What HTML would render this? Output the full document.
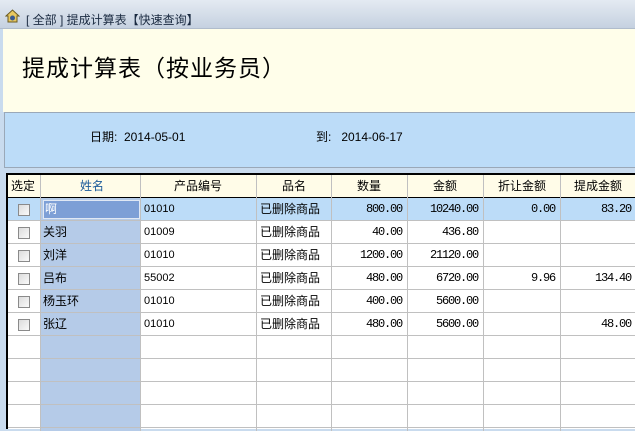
<!DOCTYPE html>
<html><head><meta charset="utf-8"><style>
*{margin:0;padding:0;box-sizing:border-box}
body{width:635px;height:429px;overflow:hidden;background:#c9dbee;font-family:"Liberation Sans","Noto Sans CJK SC",sans-serif;font-size:12px;color:#000;position:relative}
.a{position:absolute}
.top{left:0;top:0;width:635px;height:29px;background:linear-gradient(#e4eaf2,#c5d1e0);border-bottom:1px solid #b0bccc}
.cream{left:3px;top:29px;width:632px;height:83px;background:#fffeea}
.panel{left:4px;top:112px;width:631px;height:56px;background:#bcdcf8;border-top:1px solid #9aa8b8;border-bottom:1px solid #9aa8b8;border-left:1px solid #9aa8b8}
.tbl{left:6px;top:173px;width:629px;height:256px;background:#fff;border-left:2px solid #000;border-top:2px solid #000}
.hl{position:absolute;left:0;width:629px;height:1px;background:#c0c0c0}
.vl{position:absolute;top:0;width:1px;height:256px;background:#c0c0c0}
.c{position:absolute;line-height:22px;white-space:nowrap}
.r{text-align:right;font-family:"Liberation Mono",monospace;font-size:12px;letter-spacing:-1.2px}
.cb{position:absolute;width:12px;height:12px;border:1px solid #8a8a8a;background:linear-gradient(135deg,#dcdcdc,#fafafa)}
</style></head><body>
<div class="a top"></div>
<div class="a" style="left:5px;top:9px;width:15px;height:14px">
<svg width="15" height="14"><path d="M1 7 L7.5 1 L14 7 L12 7 L12 13 L3 13 L3 7Z" fill="#e8c860" stroke="#6a5a20" stroke-width="1"/><circle cx="7.5" cy="9" r="2.5" fill="#3a5a90"/></svg></div>
<div class="a" style="left:26px;top:11px;font-size:12px;color:#1a2a40">[ 全部 ] 提成计算表【快速查询】</div>
<div class="a cream"></div>
<div class="a" style="left:22px;top:49px;font-size:23px;letter-spacing:1px">提成计算表（按业务员）</div>
<div class="a panel"></div>
<div class="a" style="left:90px;top:128px">日期:&nbsp; 2014-05-01</div>
<div class="a" style="left:316px;top:128px">到:&nbsp;&nbsp; 2014-06-17</div>
<div class="a tbl">
 <div style="position:absolute;left:0;top:0;width:629px;height:23px;background:#fffce8"></div>
 <div style="position:absolute;left:33px;top:23px;width:100px;height:233px;background:#b5cbe8"></div>
 <div style="position:absolute;left:0;top:23px;width:629px;height:23px;background:#bcdcf8"></div>
 <div style="position:absolute;left:33px;top:23px;width:100px;height:23px;background:#b5cbe8"></div>
 <div style="position:absolute;left:35px;top:25px;width:97px;height:19px;background:#7d9fd6;border:1px solid #e0e8f4"></div>
 <div class="hl" style="top:22px;background:#000"></div>
 <div class="hl" style="top:45px"></div><div class="hl" style="top:68px"></div><div class="hl" style="top:91px"></div><div class="hl" style="top:114px"></div><div class="hl" style="top:137px"></div><div class="hl" style="top:160px"></div><div class="hl" style="top:183px"></div><div class="hl" style="top:206px"></div><div class="hl" style="top:229px"></div><div class="hl" style="top:252px"></div>
 <div class="vl" style="left:32px"></div><div class="vl" style="left:132px"></div><div class="vl" style="left:248px"></div><div class="vl" style="left:323px"></div><div class="vl" style="left:399px"></div><div class="vl" style="left:475px"></div><div class="vl" style="left:552px"></div>
 <div class="c" style="left:3px;top:0">选定</div>
 <div class="c" style="left:72px;top:0;color:#1a5a9a">姓名</div>
 <div class="c" style="left:166px;top:0">产品编号</div>
 <div class="c" style="left:274px;top:0">品名</div>
 <div class="c" style="left:349px;top:0">数量</div>
 <div class="c" style="left:425px;top:0">金额</div>
 <div class="c" style="left:490px;top:0">折让金额</div>
 <div class="c" style="left:566px;top:0">提成金额</div>

 <div class="cb" style="left:10px;top:29px"></div><div class="cb" style="left:10px;top:52px"></div><div class="cb" style="left:10px;top:75px"></div><div class="cb" style="left:10px;top:98px"></div><div class="cb" style="left:10px;top:121px"></div><div class="cb" style="left:10px;top:144px"></div>

 <div class="c" style="left:37px;top:23px;color:#fff">啊</div>
 <div class="c" style="left:35px;top:46px">关羽</div>
 <div class="c" style="left:35px;top:69px">刘洋</div>
 <div class="c" style="left:35px;top:92px">吕布</div>
 <div class="c" style="left:35px;top:115px">杨玉环</div>
 <div class="c" style="left:35px;top:138px">张辽</div>

 <div class="c" style="left:136px;top:23px;font-size:11px">01010</div>
 <div class="c" style="left:136px;top:46px;font-size:11px">01009</div>
 <div class="c" style="left:136px;top:69px;font-size:11px">01010</div>
 <div class="c" style="left:136px;top:92px;font-size:11px">55002</div>
 <div class="c" style="left:136px;top:115px;font-size:11px">01010</div>
 <div class="c" style="left:136px;top:138px;font-size:11px">01010</div>

 <div class="c" style="left:252px;top:23px">已删除商品</div>
 <div class="c" style="left:252px;top:46px">已删除商品</div>
 <div class="c" style="left:252px;top:69px">已删除商品</div>
 <div class="c" style="left:252px;top:92px">已删除商品</div>
 <div class="c" style="left:252px;top:115px">已删除商品</div>
 <div class="c" style="left:252px;top:138px">已删除商品</div>

 <div class="c r" style="left:324px;width:70px;top:23px">800.00</div>
 <div class="c r" style="left:324px;width:70px;top:46px">40.00</div>
 <div class="c r" style="left:324px;width:70px;top:69px">1200.00</div>
 <div class="c r" style="left:324px;width:70px;top:92px">480.00</div>
 <div class="c r" style="left:324px;width:70px;top:115px">400.00</div>
 <div class="c r" style="left:324px;width:70px;top:138px">480.00</div>

 <div class="c r" style="left:400px;width:70px;top:23px">10240.00</div>
 <div class="c r" style="left:400px;width:70px;top:46px">436.80</div>
 <div class="c r" style="left:400px;width:70px;top:69px">21120.00</div>
 <div class="c r" style="left:400px;width:70px;top:92px">6720.00</div>
 <div class="c r" style="left:400px;width:70px;top:115px">5600.00</div>
 <div class="c r" style="left:400px;width:70px;top:138px">5600.00</div>

 <div class="c r" style="left:476px;width:71px;top:23px">0.00</div>
 <div class="c r" style="left:476px;width:71px;top:92px">9.96</div>

 <div class="c r" style="left:553px;width:70px;top:23px">83.20</div>
 <div class="c r" style="left:553px;width:70px;top:92px">134.40</div>
 <div class="c r" style="left:553px;width:70px;top:138px">48.00</div>
</div>
</body></html>
